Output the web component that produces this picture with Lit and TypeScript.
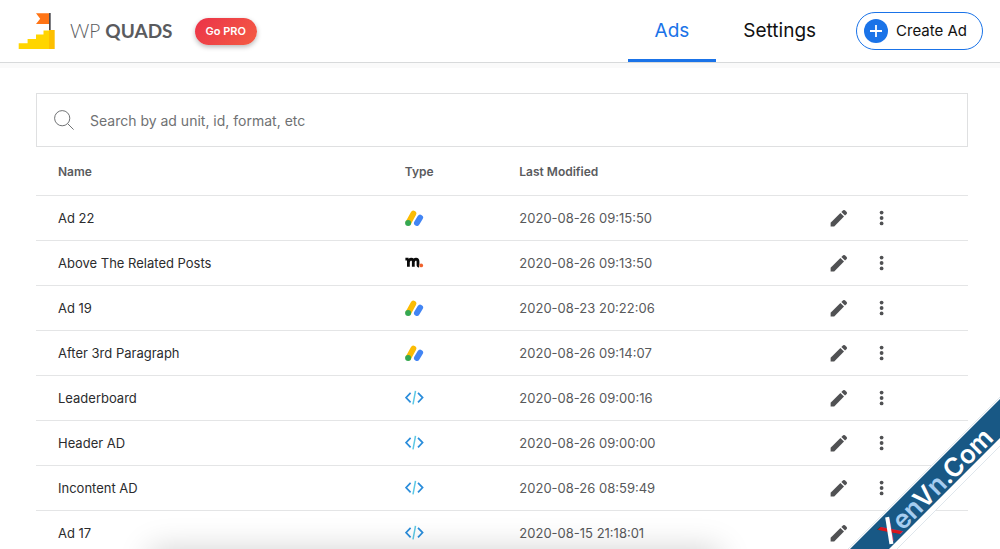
import { LitElement, html, css, svg } from "lit";
import { customElement, property, state } from "lit/decorators.js";

type AdType = "adsense" | "mgid" | "code";

interface Ad {
  name: string;
  type: AdType;
  modified: string;
}

const ADS: Ad[] = [
  { name: "Ad 22", type: "adsense", modified: "2020-08-26 09:15:50" },
  { name: "Above The Related Posts", type: "mgid", modified: "2020-08-26 09:13:50" },
  { name: "Ad 19", type: "adsense", modified: "2020-08-23 20:22:06" },
  { name: "After 3rd Paragraph", type: "adsense", modified: "2020-08-26 09:14:07" },
  { name: "Leaderboard", type: "code", modified: "2020-08-26 09:00:16" },
  { name: "Header AD", type: "code", modified: "2020-08-26 09:00:00" },
  { name: "Incontent AD", type: "code", modified: "2020-08-26 08:59:49" },
  { name: "Ad 17", type: "code", modified: "2020-08-15 21:18:01" },
];

@customElement("type-icon")
class TypeIcon extends LitElement {
  @property() type: AdType = "code";

  static styles = css`
    :host { display: block; width: 20px; height: 20px; }
    .icon { display: block; }
  `;

  private shape() {
    if (this.type === "adsense") {
      return svg`
        <path d="M3.6 14.4 L8.4 5.6" stroke="#fbbc04" stroke-width="5.8" stroke-linecap="round"/>
        <circle cx="3.1" cy="15" r="3" fill="#34a853"/>
        <path d="M11.9 15 L15.2 9.6" stroke="#4285f4" stroke-width="5.8" stroke-linecap="round"/>`;
    }
    if (this.type === "mgid") {
      return svg`
        <path d="M0.4 6.2 H3.5 M3.4 13.7 V7 M3.4 9 Q4.2 6.2 6.2 6.2 Q8.3 6.3 8.3 8.6 V13.7 M8.3 9 Q9 6.2 11 6.2 Q13 6.3 13 8.8 V12 Q13 13.2 14 13.1" stroke="#0a0a0a" stroke-width="2.8"/>
        <circle cx="16.2" cy="12.4" r="1.9" fill="#f0622d"/>`;
    }
    return svg`
      <path d="M5.6 4.8 L1 9.6 L5.6 14.4" stroke="#2a8ddb" stroke-width="1.7"/>
      <path d="M13 4.8 L17.6 9.6 L13 14.4" stroke="#2a8ddb" stroke-width="1.7"/>
      <path d="M10.5 2.8 L8 16.4" stroke="#5cc8e4" stroke-width="1.5"/>`;
  }

  render() {
    return html`<svg class="icon" width="20" height="20" viewBox="0 0 20 20" fill="none" role="img" aria-label=${this.type}>${this.shape()}</svg>`;
  }
}

@customElement("app-root")
class AppRoot extends LitElement {
  @state() private query = "";

  static styles = css`
    :host {
      display: block;
      position: relative;
      height: 100vh;
      overflow: hidden;
      background: #fff;
      color: #2b2c2e;
      font-family: Inter, "Liberation Sans", sans-serif;
      font-size: 14px;
      line-height: 20px;
    }
    * { box-sizing: border-box; }
    a { color: inherit; text-decoration: none; }
    svg { display: block; }
    button { font: inherit; color: inherit; background: none; border: 0; padding: 0; cursor: pointer; }
    .bar {
      display: flex;
      align-items: center;
      height: 63px;
      padding: 0 17px 0 18px;
      border-bottom: 1px solid #d8dadb;
      box-shadow: 0 5px 0 #fafafa;
    }
    .brand { display: flex; align-items: center; gap: 14px; }
    .word { font-family: Lato, sans-serif; font-size: 19px; line-height: 24px; color: #5a5b5e; display: flex; gap: 5px; }
    .thin { font-weight: 300; }
    .bold { font-weight: 700; }
    .pro {
      margin-left: 22px;
      padding: 0 11px;
      border-radius: 14px;
      background: linear-gradient(135deg, #eb3349, #f45c43);
      box-shadow: 0 2px 5px rgba(0, 0, 0, 0.28);
      color: #fff;
      font-size: 11px;
      font-weight: 600;
      line-height: 27px;
    }
    .nav { display: flex; align-self: stretch; margin-left: auto; color: #111; font-size: 19px; }
    .tab { display: flex; align-items: center; padding: 2px 27px 0; border-bottom: 3px solid transparent; }
    .tab.on { color: #1a73e8; border-color: #1a73e8; }
    .create {
      display: flex;
      align-items: center;
      gap: 8px;
      height: 38px;
      margin-left: 13px;
      padding: 0 15px 0 7px;
      border: 1px solid #1a73e8;
      border-radius: 19px;
      color: #111;
      font-size: 15px;
    }
    .main { padding: 30px 32px 0 36px; }
    .search {
      display: flex;
      align-items: center;
      gap: 16px;
      height: 54px;
      padding: 0 17px;
      border: 1px solid #dfe0e1;
    }
    .field { flex: 1; min-width: 0; border: 0; outline: 0; padding: 2px 0 0; font: inherit; color: inherit; background: none; }
    .field::placeholder { color: #6f7173; opacity: 1; }
    .ads { width: 100%; border-collapse: collapse; table-layout: fixed; font-size: 13px; }
    .ads th, .ads td { height: 45px; padding: 0 0 0 22px; text-align: left; border-bottom: 1px solid #e4e5e6; }
    .ads th { height: 48px; padding-top: 2px; font-size: 12px; font-weight: 600; color: #5a5b5e; }
    .ads .date { color: #58595b; }
    .c-name { width: 37.2%; }
    .c-type { width: 12.3%; }
    .c-date { width: 33.2%; }
    .acts { display: flex; gap: 23px; color: #505153; }
    .tray {
      position: absolute;
      top: 100%;
      left: 15%;
      right: 28%;
      height: 40px;
      box-shadow: 0 0 32px rgba(0, 0, 0, 0.18);
    }
    .ribbon { position: absolute; right: 0; bottom: 0; }
    .mark { font-family: Inter, sans-serif; font-size: 26px; font-weight: 600; fill: #fff; }
    .mark .red { fill: #d8151d; }
    .mark .pale { fill: #a6cdf0; }
  `;

  private logo() {
    return html`<svg width="38" height="38" viewBox="0 0 38 38" aria-hidden="true">
      <path d="M0.7 37 V31.3 H9.6 V27 H18 V22.5 H25.5 V18.4 H31 V37 Z" fill="#ffd500"/>
      <path d="M31 18 H36.7 V37 H31 Z" fill="#fdbf00"/>
      <path d="M18 1.3 H31 V12 H18 L22.2 6.7 Z" fill="#ff7415"/>
      <path d="M31 1 H32.7 V18 H31 Z" fill="#4a4a4f"/>
    </svg>`;
  }

  private row(ad: Ad) {
    return html`<tr>
      <td>${ad.name}</td>
      <td><type-icon .type=${ad.type}></type-icon></td>
      <td class="date">${ad.modified}</td>
      <td>
        <div class="acts">
          <button aria-label="Edit ${ad.name}">
            <svg width="20" height="20" viewBox="0 0 20 20" fill="currentColor">
              <path d="M1.6 14.8 L11.4 5 L15 8.6 L5.2 18.4 H1.6 Z"/>
              <path d="M12.4 4 L14.1 2.3 Q15 1.5 15.9 2.3 L17.7 4.1 Q18.5 5 17.7 5.9 L16 7.6 Z"/>
            </svg>
          </button>
          <button aria-label="More actions for ${ad.name}">
            <svg width="20" height="20" viewBox="0 0 20 20" fill="currentColor">
              <circle cx="9.6" cy="4.6" r="1.9"/><circle cx="9.6" cy="10" r="1.9"/><circle cx="9.6" cy="15.4" r="1.9"/>
            </svg>
          </button>
        </div>
      </td>
    </tr>`;
  }

  render() {
    const q = this.query.toLowerCase();
    return html`
      <header class="bar">
        <a class="brand" href="#" aria-label="WP QUADS">
          ${this.logo()}
          <span class="word"><span class="thin">WP</span><span class="bold">QUADS</span></span>
        </a>
        <a class="pro" href="#pro">Go PRO</a>
        <nav class="nav">
          <a class="tab on" href="#ads" aria-current="page">Ads</a>
          <a class="tab" href="#settings">Settings</a>
        </nav>
        <button class="create">
          <svg width="24" height="24" viewBox="0 0 24 24" aria-hidden="true">
            <circle cx="12" cy="12" r="12" fill="#1a73e8"/>
            <path d="M12 6 V18 M6 12 H18" stroke="#fff" stroke-width="1.8"/>
          </svg>
          Create Ad
        </button>
      </header>
      <main class="main">
        <label class="search">
          <svg width="20" height="20" viewBox="0 0 20 20" fill="none" stroke="#707274" stroke-width="1" role="img" aria-label="Search">
            <circle cx="8.2" cy="8.2" r="7.6"/><path d="M13.6 13.6 L19.6 19.6"/>
          </svg>
          <input class="field" type="text" placeholder="Search by ad unit, id, format, etc"
            .value=${this.query} @input=${(e: InputEvent) => (this.query = (e.target as HTMLInputElement).value)} />
        </label>
        <table class="ads">
          <thead>
            <tr><th class="c-name">Name</th><th class="c-type">Type</th><th class="c-date">Last Modified</th><th></th></tr>
          </thead>
          <tbody>${ADS.filter((ad) => ad.name.toLowerCase().includes(q)).map((ad) => this.row(ad))}</tbody>
        </table>
      </main>
      <div class="tray"></div>
      <svg class="ribbon" width="152" height="152" viewBox="0 0 152 152">
        <path d="M-3 155 L155 -3 V46 L46 155 Z" fill="#fff" stroke="#dfe6ec"/>
        <path d="M2 152 L152 2 V41 L41 152 Z" fill="#185885"/>
        <g transform="translate(42 147) rotate(-45)">
          <text class="mark" x="0" y="0"><tspan class="red">X</tspan><tspan class="pale">en</tspan>V<tspan class="pale">n</tspan>.Com</text>
          <path d="M1 1 L17 -21" stroke="#fff" stroke-width="4"/>
        </g>
      </svg>
    `;
  }
}
